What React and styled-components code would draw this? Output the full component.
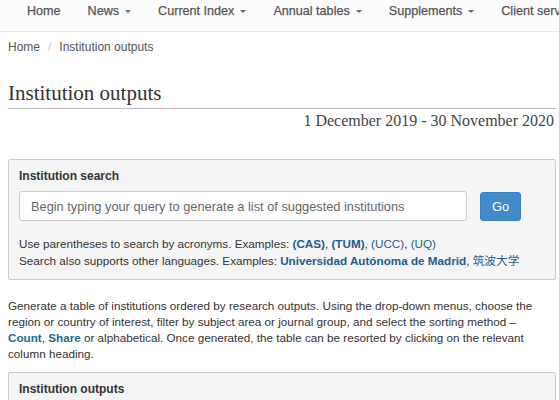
import React from 'react'
import styled, { createGlobalStyle } from 'styled-components'

const GlobalStyle = createGlobalStyle`
  body {
    margin: 0;
    background: #fff;
    font-family: "Liberation Sans", Arial, sans-serif;
    font-size: 11.7px;
    color: #333;
  }
`

const NavBar = styled.nav`
  height: 32px;
  box-sizing: border-box;
  border-bottom: 1px solid #e7e7e7;
  background: #fcfcfc;
  display: flex;
  align-items: flex-start;
  padding: 3px 0 0 27px;
  white-space: nowrap;
  overflow: hidden;
`

const NavItem = styled.a`
  font-size: 12.6px;
  color: #555;
  margin-right: 27px;
  display: flex;
  align-items: center;
  line-height: 16px;
  -webkit-text-stroke: 0.25px #555;
`

const Caret = styled.span`
  display: inline-block;
  margin-left: 6px;
  width: 0;
  height: 0;
  border-left: 3.5px solid transparent;
  border-right: 3.5px solid transparent;
  border-top: 3.5px solid #666;
`

const Container = styled.div`
  padding: 0 3px 0 8px;
`

const Breadcrumb = styled.div`
  padding: 7px 0 0;
  height: 30px;
  box-sizing: border-box;
  color: #555;
  font-size: 12px;
  line-height: 16px;
  display: flex;
  gap: 8px;
`

const Sep = styled.span`
  color: #ccc;
`

const Title = styled.h1`
  margin: 19px 0 0;
  font-family: "Liberation Serif", "Times New Roman", serif;
  font-weight: normal;
  font-size: 21px;
  color: #333;
  padding-bottom: 3px;
  border-bottom: 1px solid #bbb;
  line-height: 24px;
`

const DateRange = styled.div`
  text-align: right;
  font-family: "Liberation Serif", "Times New Roman", serif;
  font-size: 16px;
  color: #444;
  line-height: 22px;
  padding: 1px 2px 0 0;
`

const Panel = styled.section`
  margin-top: ${p => p.top}px;
  border: 1px solid #ccc;
  border-radius: 2px;
  background: #f5f5f5;
  padding: 9px 10px 10px;
`

const PanelTitle = styled.h3`
  margin: 0;
  font-size: 12px;
  font-weight: bold;
  color: #333;
  line-height: 14px;
`

const SearchRow = styled.div`
  display: flex;
  align-items: center;
  margin-top: 8px;
`

const Input = styled.input`
  width: 448px;
  height: 30px;
  box-sizing: border-box;
  border: 1px solid #ccc;
  border-radius: 3px;
  background: #fff;
  padding: 0 11px;
  font-family: "Liberation Sans", Arial, sans-serif;
  font-size: 12.8px;
  color: #555;
  &::placeholder {
    color: #666;
  }
`

const GoButton = styled.button`
  margin-left: 13px;
  width: 41px;
  height: 29px;
  border: 1px solid #3a80bf;
  border-radius: 3px;
  background: #428bca;
  color: #fff;
  font-family: "Liberation Sans", Arial, sans-serif;
  font-size: 12.8px;
`

const Hints = styled.div`
  margin-top: 15px;
  line-height: 16px;
  color: #333;
`

const Link = styled.a`
  color: ${p => (p.teal ? '#1b6d85' : '#1f5d8c')};
  font-weight: ${p => (p.plain ? 'normal' : 'bold')};
`

const Cjk = styled.span`
  color: #1f5d8c;
  font-family: "Noto Sans CJK SC", sans-serif;
`

const Intro = styled.p`
  margin: 18px 0 0;
  line-height: 16px;
  color: #333;
`

export default function App() {
  return (
    <>
      <GlobalStyle />
      <NavBar>
        <NavItem>Home</NavItem>
        <NavItem>News<Caret /></NavItem>
        <NavItem>Current Index<Caret /></NavItem>
        <NavItem>Annual tables<Caret /></NavItem>
        <NavItem>Supplements<Caret /></NavItem>
        <NavItem>Client services<Caret /></NavItem>
      </NavBar>
      <Container>
        <Breadcrumb>
          <span>Home</span>
          <Sep>/</Sep>
          <span>Institution outputs</span>
        </Breadcrumb>
        <Title>Institution outputs</Title>
        <DateRange>1 December 2019 - 30 November 2020</DateRange>
        <Panel top={27}>
          <PanelTitle>Institution search</PanelTitle>
          <SearchRow>
            <Input placeholder="Begin typing your query to generate a list of suggested institutions" />
            <GoButton>Go</GoButton>
          </SearchRow>
          <Hints>
            Use parentheses to search by acronyms. Examples: <Link>(CAS)</Link>, <Link>(TUM)</Link>, <Link plain>(UCC)</Link>, <Link plain>(UQ)</Link>
            <br />
            Search also supports other languages. Examples: <Link>Universidad Autónoma de Madrid</Link>, <Cjk>筑波大学</Cjk>
          </Hints>
        </Panel>
        <Intro>
          Generate a table of institutions ordered by research outputs. Using the drop-down menus, choose the region or country of interest, filter by subject area or journal group, and select the sorting method – <Link teal>Count</Link>, <Link teal>Share</Link> or alphabetical. Once generated, the table can be resorted by clicking on the relevant column heading.
        </Intro>
        <Panel top={10}>
          <PanelTitle>Institution outputs</PanelTitle>
        </Panel>
      </Container>
    </>
  )
}
